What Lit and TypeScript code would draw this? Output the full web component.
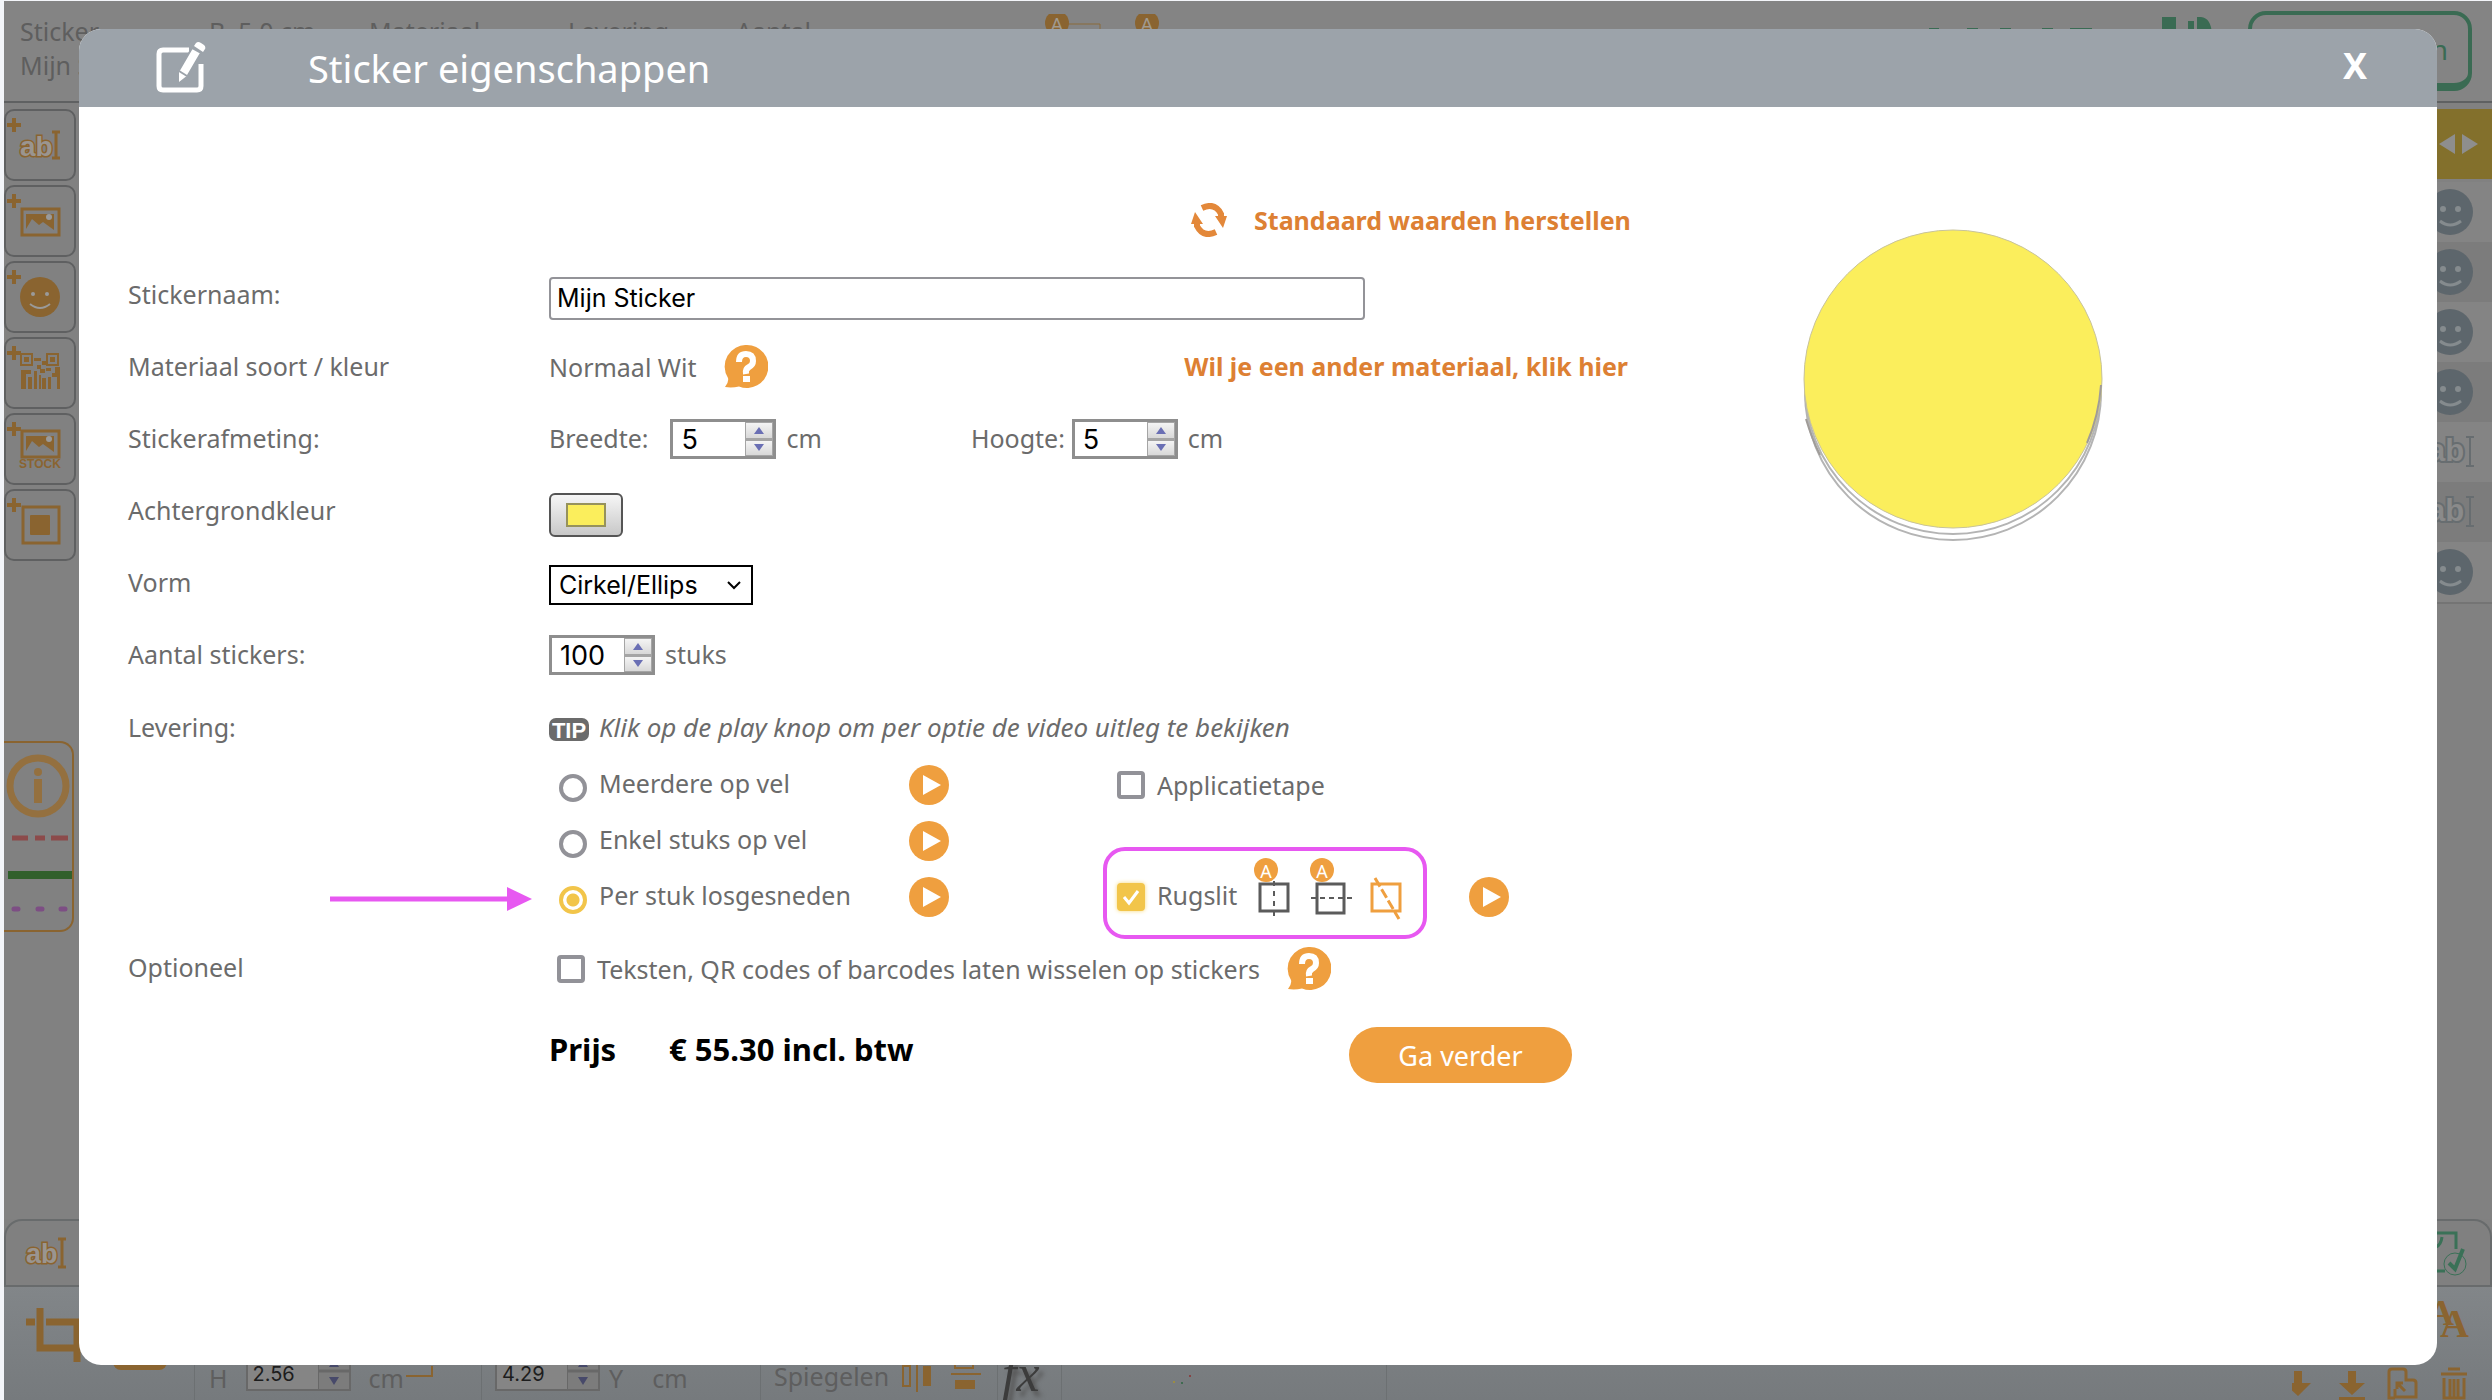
import { LitElement, html, svg, css } from "lit";
import { customElement, property, state } from "lit/decorators.js";

const plus = svg`<path d="M10 9v14M3 16h14" stroke="#8a6430" stroke-width="4" fill="none"/>`;
const photo = svg`<rect x="18" y="24" width="37" height="26" fill="none" stroke="#8a6430" stroke-width="3"/><path d="M22 44V29h28v16l-11-8-4 3-7-6z" fill="#8a6430"/><circle cx="45" cy="32" r="3" fill="#9a9a9a"/>`;

const toolIcons = [
  { name: "Tekst toevoegen", art: svg`<text x="16" y="47" class="ab" font-size="28">ab</text><path d="M48 23h8M48 49h8M52 23v26" stroke="#8a6430" stroke-width="3" fill="none"/>` },
  { name: "Afbeelding toevoegen", art: photo },
  { name: "Symbool toevoegen", art: svg`<circle cx="36" cy="36" r="20" fill="#8a6430"/><circle cx="29" cy="33" r="2" fill="#9a9a9a"/><circle cx="43" cy="33" r="2" fill="#9a9a9a"/><path d="M26 43q10 8 20 0" stroke="#9a9a9a" stroke-width="2" fill="none"/>` },
  { name: "QR code toevoegen", art: svg`<g fill="none" stroke="#8a6430" stroke-width="2"><rect x="17" y="17" width="11" height="11"/><rect x="43" y="17" width="11" height="11"/></g><path fill="#8a6430" d="M20 20h5v5h-5zM46 20h5v5h-5zM30 21h7v3h-7zM38 24h4v4h-4zM33 28h4v4h-4zM36 32h5v4h-5zM42 31h5v3h-5zM17 33h10v4h-5v15h-5zM24 40h4v12h-4zM30 34h3v18h-3zM35 38h2v14h-2zM38 41h4v11h-4zM44 40h3v12h-3zM48 36h3v-6h5v22h-3V40h-5z"/>` },
  { name: "Stockfoto toevoegen", art: svg`<g transform="translate(0 -6)">${photo}</g><text x="36" y="55" text-anchor="middle" class="stock">STOCK</text>` },
  { name: "Kader toevoegen", art: svg`<rect x="19" y="18" width="36" height="36" fill="none" stroke="#8a6430" stroke-width="3"/><rect x="26" y="26" width="20" height="20" rx="1" fill="#8a6430"/>` },
];

const layers = ["smile", "smile", "smile", "smile", "text", "text", "smile"];

@customElement("number-field")
export class NumberField extends LitElement {
  @property() label = "";
  @property() fieldId = "n";
  @property({ type: Number }) value = 0;
  @property({ type: Boolean }) quiet = false;

  static styles = css`
    :host { display: inline-flex; align-items: center; }
    .label { font: 25px/36px "Noto Sans", sans-serif; color: #6b6b6b; padding: 0 var(--label-gap, 0px) 2px 0; white-space: nowrap; }
    .box { display: flex; box-sizing: border-box; width: 106px; height: 40px; border: 3px solid #8e8e8e; background: #fff; }
    .value { flex: 1; min-width: 0; border: 0; padding: 0 0 0 8px; background: none; font: 27px Inter, sans-serif; color: #000; appearance: textfield; outline: 0; }
    .value::-webkit-inner-spin-button { appearance: none; margin: 0; }
    .spin { display: grid; gap: 3px; width: 28px; background: #a5a5a5; padding: 1px; box-sizing: border-box; }
    .step { display: grid; place-items: center; padding: 0; border: 0; background: linear-gradient(#f4f4f4, #d8d8d8); }
    .tri { width: 12px; height: 7px; fill: #6a6fb4; }
  `;

  private step(by: number) {
    this.value = Math.max(0, this.value + by);
  }

  render() {
    return html`
      ${this.quiet ? "" : html`<label class="label" for=${this.fieldId}>${this.label}</label>`}
      <span class="box">
        <input class="value" id=${this.fieldId} type="number" aria-label=${this.label} .value=${String(this.value)} />
        <span class="spin">
          <button class="step" aria-label="Meer" @click=${() => this.step(1)}><svg class="tri" viewBox="0 0 12 7"><path d="M6 0l5 7H1z" /></svg></button>
          <button class="step" aria-label="Minder" @click=${() => this.step(-1)}><svg class="tri" viewBox="0 0 12 7"><path d="M6 7l5-7H1z" /></svg></button>
        </span>
      </span>`;
  }
}

@customElement("editor-backdrop")
export class EditorBackdrop extends LitElement {
  static styles = css`
    :host { display: grid; grid-template-rows: 102px 1fr 181px; height: 100%; background: #818181; font: 25px/34px "Noto Sans", sans-serif; color: #5e5e5e; overflow: hidden; }
    .top { display: flex; border-bottom: 2px solid #5f6162; background: #848484; padding: 13px 20px 0 16px; justify-content: space-between; }
    .facts { display: grid; grid-template-columns: 189px 160px 199px 168px 308px auto; align-content: start; white-space: nowrap; }
    .slits { display: block; width: 120px; height: 34px; }
    .buy { display: flex; align-items: flex-start; gap: 31px; }
    .thumb { width: 290px; height: 20px; }
    .order { box-sizing: border-box; width: 224px; height: 80px; margin-top: -3px; padding: 0 20px 0 0; border: 4px solid #3a6b53; border-bottom-width: 8px; border-radius: 18px; background: none; color: #3a6b53; font: 28px "Noto Sans", sans-serif; text-align: right; }
    .middle { display: flex; justify-content: space-between; padding-top: 6px; }
    .tools { display: grid; grid-auto-rows: 72px; gap: 4px; width: 72px; align-content: start; }
    .tool { box-sizing: border-box; padding: 0; border: 2px solid #5f6061; border-radius: 10px; background: none; }
    .art { display: block; width: 68px; height: 68px; }
    .ab { font-family: "Liberation Sans", sans-serif; font-weight: 700; fill: #9a9590; stroke: #8a6430; stroke-width: 3px; paint-order: stroke; }
    .stock { font: 700 12px "Liberation Sans", sans-serif; fill: #8a6430; }
    .info { box-sizing: border-box; width: 70px; height: 191px; margin-top: 180px; border: 2px solid #8a6430; border-left: 0; border-radius: 0 14px 14px 0; }
    .infoart { display: block; width: 68px; height: 187px; }
    .layers { width: 55px; }
    .nudge { display: block; width: 55px; height: 70px; margin-bottom: 3px; background: #83702c; }
    .layer { display: block; width: 55px; height: 60px; background: #848484; }
    .layer:nth-child(odd) { background: #7c7c7c; }
    .end { border-bottom: 2px solid #747474; }
    .bottom { display: grid; grid-template-rows: 68px 1fr; background: linear-gradient(#808080 66px, #828689 66px, #767a7d); }
    .tabs { display: flex; justify-content: space-between; border-bottom: 2px solid #686b6c; }
    .tab { box-sizing: border-box; width: 96px; height: 66px; border: 2px solid #686b6c; border-bottom: 0; border-radius: 18px 0 0 0; }
    .tab.right { border-radius: 0 18px 0 0; }
    .tabart { display: block; width: 92px; height: 64px; }
    .props { display: flex; align-items: flex-end; justify-content: space-between; overflow: hidden; }
    .cells { display: flex; align-items: flex-end; height: 113px; }
    .cell { box-sizing: border-box; display: flex; align-items: center; height: 40px; padding-bottom: 4px; border-right: 1px solid #6c7072; white-space: nowrap; }
    .crop { width: 190px; height: 113px; border-right: 1px solid #6c7072; }
    .size { width: 287px; padding-left: 14px; gap: 18px; }
    .pos { width: 279px; padding-left: 13px; gap: 9px; }
    .unit { margin-left: 20px; }
    .linked { width: 28px; height: 24px; margin-left: -16px; }
    .mirror { width: 237px; padding: 0 0 8px 13px; }
    .effect { width: 64px; padding: 0 0 12px 4px; font: italic 52px/24px "Liberation Serif", serif; color: #3c3c3c; text-shadow: 4px 5px 4px #555; }
    .fonts { width: 325px; padding: 0 0 0 108px; }
    .dots { width: 24px; height: 24px; }
    .num { box-sizing: border-box; display: flex; width: 105px; height: 40px; margin-bottom: 14px; border: 2px solid #686868; background: #858585; }
    .val { flex: 1; min-width: 0; padding: 6px 0 0 5px; border: 0; background: none; color: #1d1d1d; font: 20px Inter, sans-serif; }
    .spin { width: 30px; height: 36px; background: #7c7c7c; border-left: 1px solid #686868; }
    .actions { width: 200px; height: 113px; }
  `;

  private layerArt(kind: string) {
    return kind === "smile"
      ? svg`<circle cx="13" cy="30" r="23" fill="#5d666c"/><circle cx="6" cy="27" r="3" fill="#858b8e"/><circle cx="21" cy="27" r="3" fill="#858b8e"/><path d="M3 39q10 8 21 0" stroke="#858b8e" stroke-width="3" fill="none"/>`
      : svg`<text x="-9" y="39" font-family="Liberation Sans" font-weight="700" font-size="31" fill="#8a8a8a" stroke="#676d70" stroke-width="4" paint-order="stroke">ab</text><path d="M29 15h8M29 44h8M33 15v29" stroke="#676d70" stroke-width="2" fill="none"/>`;
  }

  private numberBox(name: string, value: string) {
    return html`<span class="num"><input class="val" aria-label=${name} value=${value} /><svg class="spin" viewBox="0 0 30 36"><path d="M0 18h30" stroke="#686868" stroke-width="3" /><path d="M15 6l5 8H10zM15 32l5-8H10z" fill="#47496a" /></svg></span>`;
  }

  render() {
    return html`
      <div class="top">
        <div class="facts">
          <span>Sticker</span><span>B. 5.0 cm</span><span>Materiaal</span><span>Levering</span><span>Aantal</span>
          <svg class="slits" viewBox="0 0 120 34">
            <path d="M20 10h36v10" stroke="#8a6a3a" stroke-width="1" fill="none" />
            <circle cx="13" cy="9" r="12" fill="#8a6430" /><circle cx="103" cy="9" r="12" fill="#8a6430" />
            <g font-family="Noto Sans" font-size="20" fill="#a09a90" text-anchor="middle"><text x="13" y="18">A</text><text x="103" y="18">A</text></g>
          </svg>
          <span>Mijn Sticker</span>
        </div>
        <div class="buy">
          <svg class="thumb" viewBox="0 0 290 20">
            <path fill="#3a6b53" d="M2 14h10v6H2zM40 14h11v6H40zM73 14h11v6H73zM115 14h11v6h-11zM143 14h22v6h-22zM235 3h14v17h-14zM261 7h6v13h-6zM270 3h4q10 1 11 17h-15z" />
          </svg>
          <button class="order">n</button>
        </div>
      </div>
      <div class="middle">
        <div>
          <div class="tools">
            ${toolIcons.map((t) => html`<button class="tool" aria-label=${t.name}><svg class="art" viewBox="2 2 68 68">${plus}${t.art}</svg></button>`)}
          </div>
          <div class="info">
            <svg class="infoart" viewBox="0 0 68 187">
              <circle cx="34" cy="43" r="28" fill="none" stroke="#94703f" stroke-width="7" />
              <circle cx="34" cy="29" r="4" fill="#94703f" /><path d="M34 36v24" stroke="#94703f" stroke-width="8" />
              <path d="M8 95h16M31 95h10M47 95h17" stroke="#8c4a4a" stroke-width="5" />
              <path d="M4 132h64" stroke="#31602c" stroke-width="8" />
              <path d="M10 166h4M34 166h4M57 166h4" stroke="#7d4e84" stroke-width="5" stroke-linecap="round" />
            </svg>
          </div>
        </div>
        <div class="layers">
          <svg class="nudge" viewBox="0 0 55 70"><path d="M2 35l16-10v20zM41 35L25 25v20z" fill="#8e8e8e" /></svg>
          ${layers.map((kind) => html`<svg class="layer" viewBox="0 0 55 60">${this.layerArt(kind)}</svg>`)}
          <div class="end"></div>
        </div>
      </div>
      <div class="bottom">
        <div class="tabs">
          <div class="tab"><svg class="tabart" viewBox="0 0 92 64"><text x="20" y="42" class="ab" font-size="27">ab</text><path d="M52 18h8M52 46h8M56 18v28" stroke="#8a6430" stroke-width="3" /></svg></div>
          <div class="tab right"><svg class="tabart" viewBox="0 0 92 64">
            <g fill="none" stroke="#3a7157" stroke-width="3"><path d="M38 12h20v16M32 50h15M44 16q-1 8-6 10" /><circle cx="57" cy="43" r="11" stroke-width="1" /><path d="M51 42l6 6 8-20" stroke-width="4" /></g></svg></div>
        </div>
        <div class="props">
          <div class="cells">
            <svg class="crop" viewBox="0 0 190 113"><path d="M22 35h9M42 35h31v40M36 21v40h40" fill="none" stroke="#8a6430" stroke-width="7" /><rect x="109" y="58" width="54" height="25" rx="8" fill="#8a6430" /></svg>
            <div class="cell size"><span>H</span>${this.numberBox("Hoogte", "2.56")}<span>cm</span><svg class="linked" viewBox="0 0 28 24"><path d="M0 10h26V0" fill="none" stroke="#8a6430" stroke-width="2" /></svg></div>
            <div class="cell pos">${this.numberBox("Y positie", "4.29")}<span>Y</span><span class="unit">cm</span></div>
            <div class="cell mirror"><span>Spiegelen</span>
              <svg width="100" height="40" viewBox="0 0 100 40"><g fill="none" stroke="#8a6430" stroke-width="2"><path d="M14 10h7v20h-7zM28 8v28M66 4v8h18V4M62 18h30" /></g><path fill="#8a6430" d="M34 10h8v20h-8zM66 24h20v9H66z" /></svg></div>
            <div class="cell effect">fx</div>
            <div class="cell fonts"><svg class="dots" viewBox="0 0 24 24"><circle cx="4" cy="14" r="1" fill="#a8932e" /><circle cx="12" cy="15" r="1" fill="#2c6640" /><circle cx="20" cy="8" r="1" fill="#8c3030" /></svg></div>
          </div>
          <svg class="actions" viewBox="0 0 200 113">
            <path d="M2 84h8v12h9L6 109-8 96H2zM56 84h8v12h9l-13 12-13-12h9zM47 110h26v3H47z" fill="#8a6430" />
            <text x="136" y="38" font-family="Liberation Serif" font-weight="700" font-size="36" fill="#8a6430">A</text>
            <text x="148" y="50" font-family="Liberation Serif" font-weight="700" font-size="40" fill="#8a6430">A</text>
            <g fill="none" stroke="#8a6430" stroke-width="3"><path d="M103 111h-6V85q0-3 3-3h11q3 0 3 3v8h7q3 0 3 3v14h-21v-8M113 104l-7-7M105 102v-6h6" /><path d="M149 87h26M156 82h12M152 91v20h20V91M158 92v18M162 92v18M166 92v18" /></g>
          </svg>
        </div>
      </div>`;
  }
}

@customElement("app-root")
export class AppRoot extends LitElement {
  @state() private delivery = "Per stuk losgesneden";

  static styles = css`
    :host { display: block; }
    .page { box-sizing: border-box; position: relative; height: 100vh; padding: 1px 0 0 4px; background: #f3f5f9; overflow: hidden; font: 25px/36px "Noto Sans", sans-serif; color: #6b6b6b; }
    .dialog { position: absolute; inset: 29px 55px 35px 79px; border-radius: 22px; background: #fff; overflow: hidden; }
    .head { display: flex; align-items: center; height: 78px; padding: 0 64px 0 77px; background: #9ca3aa; color: #fff; }
    .edit { width: 50px; height: 52px; margin-right: 102px; }
    .title { flex: 1; margin: 0; font-weight: 400; font-size: 38px; line-height: 48px; }
    .close { border: 0; padding: 0 6px 4px; background: none; color: #fff; font: 700 36px/40px "Noto Sans", sans-serif; }
    .body { display: grid; grid-template-columns: 1580px 1fr; padding: 76px 0 0 49px; }
    .line { display: grid; grid-template-columns: 421px 1fr; align-items: center; height: 72px; white-space: nowrap; }
    .line.first { height: 76px; }
    .line.tip { height: 66px; align-items: start; }
    .line.tip > * { height: 72px; }
    .lead, .unit, .link { padding-bottom: 2px; }
    .cellrow { display: flex; align-items: center; }
    .spread { justify-content: space-between; padding-right: 80px; }
    .link { color: #dd8033; font-weight: 700; text-decoration: none; }
    .restore { display: flex; align-items: center; gap: 27px; margin-left: 642px; padding: 0 0 2px; border: 0; background: none; color: #dd8033; font: 700 25px/36px "Noto Sans", sans-serif; }
    .sync { width: 36px; height: 34px; }
    .name { box-sizing: border-box; width: 816px; height: 43px; margin-top: 6px; padding: 0 6px; border: 2px solid #939398; border-radius: 4px; font: 25px Inter, sans-serif; color: #000; }
    .help { width: 44px; height: 44px; margin-left: 27px; padding: 0; border: 0; background: none; }
    .icon { display: block; width: 100%; height: 100%; }
    .width { --label-gap: 22px; }
    .height { --label-gap: 7px; margin-left: 149px; }
    .unit { margin-left: 10px; }
    .color { display: grid; place-items: center; width: 74px; height: 44px; margin-top: 8px; padding: 0; border: 2px solid #555; border-radius: 6px; background: linear-gradient(#f6f6f6, #c8c8c8); }
    .swatch { box-sizing: border-box; width: 40px; height: 24px; border: 2px solid #96925c; background: #fbee5c; }
    .selectbox { display: grid; width: 204px; margin-top: 4px; align-items: center; }
    .shape { grid-area: 1 / 1; width: 100%; height: 40px; padding: 0 8px; appearance: none; border: 2px solid #000; border-radius: 0; background: #fff; color: #000; font: 25px Inter, sans-serif; }
    .chev { grid-area: 1 / 1; justify-self: end; width: 16px; height: 10px; margin-right: 11px; pointer-events: none; }
    .tipicon { width: 40px; height: 23px; margin: 4px 10px 0 0; }
    .tiptext { font-style: italic; font-size: 26px; }
    .options { position: relative; display: grid; grid-template-columns: 360px 208px 352px auto; grid-auto-rows: 56px; align-items: center; margin-left: 421px; white-space: nowrap; }
    .option { display: flex; align-items: center; }
    .raised { padding-bottom: 4px; }
    .radio, .check { appearance: none; box-sizing: border-box; width: 28px; height: 28px; margin: 0 12px 0 0; border: 4px solid #929298; background: #fff; flex: none; }
    .radio { border-radius: 50%; margin: 6px 12px 0 10px; }
    .radio:checked { border-color: #f2c54a; background: radial-gradient(circle, #f2c54a 6px, #fff 7px); }
    .check { border-radius: 4px; }
    .check:checked { border-color: #f2c54a; background: #f2c54a; box-shadow: 0 0 4px #f7d978; }
    .checkbox { display: grid; }
    .checkbox > * { grid-area: 1 / 1; }
    .mark { width: 20px; height: 20px; margin: 4px; pointer-events: none; }
    .play { width: 40px; height: 40px; padding: 0; border: 0; background: none; }
    .slits { width: 150px; height: 64px; margin: -16px 0 0 16px; }
    .optional { margin-top: 8px; }
    .optional .check { margin-left: 8px; }
    .price { height: 100px; }
    .total { display: flex; align-items: center; color: #000; font-weight: 700; font-size: 31px; line-height: 44px; }
    .amount { width: 680px; padding-bottom: 12px; }
    .caption { width: 120px; padding-bottom: 12px; }
    .go { width: 223px; height: 56px; border: 0; border-radius: 28px; background: #ef9f3f; color: #fff; font: 27px "Noto Sans", sans-serif; padding: 0; }
    .sticker { width: 302px; height: 316px; margin: 46px 0 0 94px; }
    .ring { position: absolute; left: 554px; top: 90px; box-sizing: border-box; width: 324px; height: 92px; border: 4px solid #e758f1; border-radius: 22px; pointer-events: none; }
    .arrow { position: absolute; left: -219px; top: 130px; width: 202px; height: 24px; }
  `;

  private playButton() {
    return html`<button class="play" aria-label="Video uitleg"><svg class="icon" viewBox="0 0 40 40"><circle cx="20" cy="20" r="20" fill="#ef9f3f" /><path d="M14 10v20L32 20z" fill="#fff" /></svg></button>`;
  }

  private helpButton() {
    return html`<button class="help" aria-label="Uitleg"><svg class="icon" viewBox="0 0 44 44"><path d="M23 0a21.500 21.500 0 1 1-8 41.500Q8 43 1 42q4-5 3-9A21.500 21.500 0 0 1 23 0z" fill="#ef9f3f" /><path d="M15 17q0-8 7-8t7 7q0 4-4 6t-3 7" fill="none" stroke="#fff" stroke-width="6" /><rect x="19" y="31" width="7" height="6" fill="#fff" /></svg></button>`;
  }

  private deliveryOption(label: string, id: string) {
    return html`<div class="option">
      <input class="radio" type="radio" name="delivery" id=${id} .checked=${this.delivery === label} @change=${() => (this.delivery = label)} />
      <label class="raised" for=${id}>${label}</label>
    </div>
    ${this.playButton()}`;
  }

  render() {
    return html`
      <main class="page">
        <editor-backdrop></editor-backdrop>
        <section class="dialog" role="dialog" aria-labelledby="title">
          <header class="head">
            <svg class="edit" viewBox="0 0 50 52">
              <path d="M33 8H7q-4 0-4 4v32q0 4 4 4h34q4 0 4-4V22" fill="none" stroke="#fff" stroke-width="5" />
              <path d="M22 30L36 6l9 5-14 24-9 7z" fill="#fff" stroke="#9ca3aa" stroke-width="2" /><path d="M38 4l2-3q2-2 5 0l3 2q2 2 1 4l-2 3z" fill="#fff" /><path d="M23 29l8 5" stroke="#9ca3aa" stroke-width="2" />
            </svg>
            <h1 class="title" id="title">Sticker eigenschappen</h1>
            <button class="close" aria-label="Sluiten">X</button>
          </header>
          <div class="body">
            <div>
              <div class="line first"><span></span>
                <button class="restore">
                  <svg class="sync" viewBox="0 0 36 34"><g fill="none" stroke="#e3883a" stroke-width="6"><path d="M11 5Q24-1 30 11V16M25 29Q12 35 6 23V18" /></g><path d="M24 13h12l-4 12zM0 21L4 9l8 12z" fill="#e3883a" /></svg>
                  Standaard waarden herstellen
                </button></div>
              <div class="line"><label class="lead" for="name">Stickernaam:</label><div class="cellrow"><input class="name" id="name" type="text" value="Mijn Sticker" /></div></div>
              <div class="line"><span class="lead">Materiaal soort / kleur</span>
                <div class="cellrow spread"><span class="cellrow">Normaal Wit ${this.helpButton()}</span><a class="link" href="#materiaal">Wil je een ander materiaal, klik hier</a></div></div>
              <div class="line"><span class="lead">Stickerafmeting:</span>
                <div class="cellrow">
                  <number-field class="width" label="Breedte:" fieldId="width" .value=${5}></number-field><span class="unit">cm</span>
                  <number-field class="height" label="Hoogte:" fieldId="height" .value=${5}></number-field><span class="unit">cm</span>
                </div></div>
              <div class="line"><label class="lead" for="color">Achtergrondkleur</label><div><button class="color" id="color"><span class="swatch"></span></button></div></div>
              <div class="line"><label class="lead" for="shape">Vorm</label>
                <div class="selectbox"><select class="shape" id="shape"><option>Cirkel/Ellips</option></select><svg class="chev" viewBox="0 0 16 10"><path d="M2 2l6 6 6-6" fill="none" stroke="#000" stroke-width="2" /></svg></div></div>
              <div class="line"><span class="lead">Aantal stickers:</span><div class="cellrow"><number-field quiet label="Aantal stickers" fieldId="count" .value=${100}></number-field><span class="unit">stuks</span></div></div>
              <div class="line tip"><span class="cellrow">Levering:</span>
                <div class="cellrow">
                  <svg class="tipicon" viewBox="0 0 40 23"><rect width="40" height="23" rx="7" fill="#6b6b6b" /><text x="20" y="20" text-anchor="middle" font-family="Liberation Sans" font-weight="700" font-size="22" fill="#fff">TIP</text></svg>
                  <span class="tiptext">Klik op de play knop om per optie de video uitleg te bekijken</span></div></div>
              <div class="options">
                ${this.deliveryOption("Meerdere op vel", "d1")}
                <div class="option"><input class="check" type="checkbox" id="tape" /><label for="tape">Applicatietape</label></div><span></span>
                ${this.deliveryOption("Enkel stuks op vel", "d2")}<span></span><span></span>
                ${this.deliveryOption("Per stuk losgesneden", "d3")}
                <div class="option">
                  <span class="checkbox"><input class="check" type="checkbox" id="slit" checked /><svg class="mark" viewBox="0 0 20 20"><path d="M3 10l5 6L17 4" fill="none" stroke="#fff" stroke-width="3" /></svg></span>
                  <label class="raised" for="slit">Rugslit</label>
                  <svg class="slits" viewBox="0 0 150 64">
                    <g fill="none" stroke="#5b5b5b" stroke-width="3"><rect x="7" y="27" width="28" height="27" /><path d="M21 24v38" stroke-width="2" stroke-dasharray="5 5" /><rect x="64" y="27" width="27" height="29" /><path d="M58 41h41" stroke-width="2" stroke-dasharray="5 4" /></g>
                    <g fill="none" stroke="#ef9f3f"><rect x="119" y="27" width="28" height="27" stroke-width="3" /><path d="M122 21l24 41" stroke-width="3" stroke-dasharray="10 3" /></g>
                    <circle cx="13" cy="13" r="12" fill="#ef9f3f" /><circle cx="69" cy="13" r="12" fill="#ef9f3f" />
                    <g font-family="Noto Sans" font-size="18" fill="#fff" text-anchor="middle"><text x="13" y="21">A</text><text x="69" y="21">A</text></g>
                  </svg>
                </div>
                ${this.playButton()}
                <div class="ring"></div>
                <svg class="arrow" viewBox="0 0 202 24"><path d="M0 12h180" stroke="#e758f1" stroke-width="5" /><path d="M177 0l25 12-25 12z" fill="#e758f1" /></svg>
              </div>
              <div class="line optional"><span class="raised">Optioneel</span>
                <div class="cellrow"><input class="check" type="checkbox" id="swap" /><label for="swap">Teksten, QR codes of barcodes laten wisselen op stickers</label>${this.helpButton()}</div></div>
              <div class="line price"><span></span>
                <div class="total"><span class="caption">Prijs</span><span class="amount">€ 55.30 incl. btw</span><button class="go">Ga verder</button></div></div>
            </div>
            <svg class="sticker" viewBox="0 0 302 316">
              <g fill="#fff" stroke="#b4b4b4" stroke-width="2"><circle cx="151" cy="163" r="148" /><circle cx="151" cy="157" r="148" /><circle cx="151" cy="150" r="149" fill="#fbee5c" stroke="#c8c39a" stroke-width="1" /></g>
              <path d="M299 156q-2 30-14 58M4 190q6 20 14 36" fill="none" stroke="#a09c98" stroke-width="2" />
            </svg>
          </div>
        </section>
      </main>`;
  }
}
